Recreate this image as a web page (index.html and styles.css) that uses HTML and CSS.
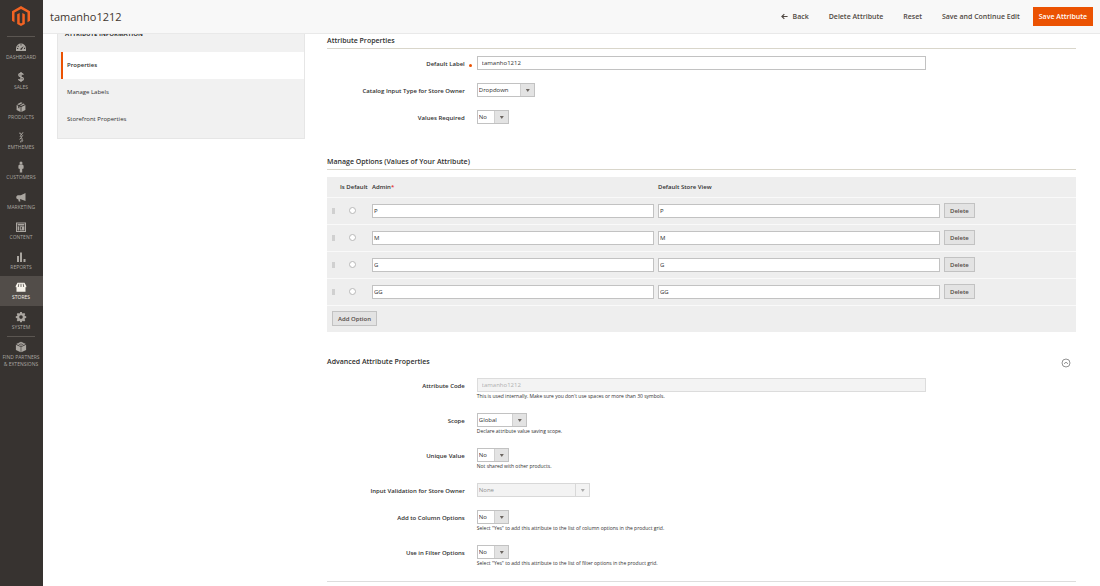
FILE: index.html
```html
<!DOCTYPE html>
<html lang="en">
<head>
<meta charset="utf-8">
<title>tamanho1212</title>
<link rel="stylesheet" href="styles.css">
</head>
<body>
<nav class="menu" aria-label="Main">
  <a class="logo" href="#" aria-label="Home">
    <svg viewBox="0 0 18 20"><path d="M9 0 0 5.2v9.6l2.5 1.4V6.6L9 2.9l6.5 3.7v9.6l2.5-1.4V5.2z"/><path d="M10.3 7v9.7L9 17.4l-1.300-.7V7L5.200 8.300v9.700L9 20l3.800-2V8.300z"/></svg>
  </a>
  <ul class="menu-list">
    <li><a class="menu-item" href="#"><svg viewBox="0 0 12 12"><path fill-rule="evenodd" d="M1 10V7.500a5 5 0 0 1 10 0V10zM5.300 8.800h1.400L8.800 5 5.600 7.500zM2 7h1.200v1H2zM3 4.500l.9.700-.6.700-.8-.7zM5.500 3.200h1v1.200h-1zM9 6.800h1.100V8H9z"/></svg>Dashboard</a></li>
    <li><a class="menu-item" href="#"><svg viewBox="0 0 12 12"><path class="stroke" d="M8.300 3.700C8 2.800 7 2.500 6 2.500c-1.300 0-2.200.6-2.200 1.600C3.800 6.300 8.300 5.300 8.300 7.800c0 1.100-1 1.700-2.300 1.700S3.800 9 3.600 8M6 1v10"/></svg>Sales</a></li>
    <li><a class="menu-item" href="#"><svg viewBox="0 0 12 12"><path d="m6 1.300 1.700.8L4 4 2.200 3.200zM8.500 2.500l1.400.700L6 5l-1-.5zM1.600 4l1.600.8v2.100l1.200.6V5.400l1.200.6v4.900L1.600 9zM10.400 4v5l-4 1.900V6z"/></svg>Products</a></li>
    <li><a class="menu-item" href="#"><svg viewBox="0 0 12 12"><path class="thin" d="M4.200 2.200c1.500-.6 2 .7 1.800 1.700S4.500 5.500 6 6.500s1.700 1.700.8 2.500-1.500 1-1.300 2.300M8 1.300 6 4.200M8.200 4.300 6 6.200M4.500 8.300l2-1.400M6.500 11.200l1.400-2"/></svg>Emthemes</a></li>
    <li><a class="menu-item" href="#"><svg viewBox="0 0 12 12"><circle cx="6" cy="2" r="1.500"/><path d="M4.600 3.500h2.800l1.200 1v2.900l-.9.400v.2l-.5-.3V11.500H4.800V7.700l-.5.3v-.2l-.9-.4V4.500z"/></svg>Customers</a></li>
    <li><a class="menu-item" href="#"><svg viewBox="0 0 12 12"><path d="M10.500 2v8L5.800 8.300H4.900l.5 2.300H3.800l-.6-2.300h-.6L1.300 7.200V5.400l1.300-1.200h3.200z"/></svg>Marketing</a></li>
    <li><a class="menu-item" href="#"><svg viewBox="0 0 12 12"><path fill-rule="evenodd" d="M1 1.500h10v9.500H1zM2 2.500V10h8V2.500zM2.600 3h6.800v1.500H2.600zM2.600 5.200h1.700v4.200H2.600zM5 5.200h4.400v4.200H5zM5.800 6v2.600h1V6z"/></svg>Content</a></li>
    <li><a class="menu-item" href="#"><svg viewBox="0 0 12 12"><path d="M2 5h2v6H2zM5 1.500h2V11H5zM8.500 8h2v3h-2z"/></svg>Reports</a></li>
    <li><a class="menu-item active" href="#"><svg viewBox="0 0 12 12"><path fill-rule="evenodd" d="M2.500 1.800h7L11.300 5v1.300H10.500V10.700h-9V6.300H.7V5zM3.600 2.800 2.800 6h.8l.7-3.200zM5.600 2.800V6h.8V2.800zM7.700 2.800 8.400 6h.8l-.8-3.200z"/></svg>Stores</a></li>
    <li><a class="menu-item" href="#"><svg viewBox="0 0 12 12"><path fill-rule="evenodd" d="M5.100 1h1.800l.3 1.300.7.3 1.200-.7 1.200 1.200-.7 1.200.3.700 1.300.3v1.700l-1.300.3-.3.700.7 1.200-1.200 1.200-1.200-.7-.7.300L6.900 11.200H5.100l-.3-1.200-.7-.3-1.200.7-1.200-1.200.7-1.200-.3-.7L.8 7V5.300L2.100 5l.3-.7-.7-1.200 1.200-1.200 1.200.7.700-.3zM6 4.300a1.800 1.800 0 1 0 0 3.600 1.800 1.800 0 0 0 0-3.600z"/></svg>System</a></li>
    <li class="partners"><a class="menu-item" href="#"><svg viewBox="0 0 12 12"><path d="M6 .8 10.800 3 6 5.400 1.200 3z"/><path d="M.9 3.700 5.700 6.100v5.200L.9 8.900zM11.100 3.700 6.300 6.100v5.200l4.800-2.400z"/><path class="cut" d="M3.600 3 6 4.200 8.400 3M6 1.800v1.400"/></svg>Find Partners &amp;&nbsp;Extensions</a></li>
  </ul>
</nav>

<div class="page">
  <header class="topbar">
    <h1 class="page-title">tamanho1212</h1>
    <div class="actions">
      <button type="button" class="action"><svg class="back-icon" viewBox="0 0 8 8"><path d="M7.500 4H1M3.800 1.200 1 4l2.800 2.800"/></svg>Back</button>
      <button type="button" class="action">Delete Attribute</button>
      <button type="button" class="action">Reset</button>
      <button type="button" class="action">Save and Continue Edit</button>
      <button type="button" class="action primary">Save Attribute</button>
    </div>
  </header>

  <div class="content">
    <aside class="tabs">
      <h2 class="tabs-title">Attribute Information</h2>
      <a class="tab current" href="#">Properties</a>
      <a class="tab" href="#">Manage Labels</a>
      <a class="tab" href="#">Storefront Properties</a>
    </aside>

    <main class="sections">
      <section class="section">
        <h2 class="section-title ruled">Attribute Properties</h2>
        <div class="fields">
          <div class="field">
            <label class="label required" for="label">Default Label</label>
            <div class="control"><input class="text" id="label" type="text" value="tamanho1212"></div>
          </div>
          <div class="field">
            <label class="label" for="type">Catalog Input Type for Store Owner</label>
            <div class="control"><span class="select w-medium"><select id="type"><option>Dropdown</option></select></span></div>
          </div>
          <div class="field">
            <label class="label" for="required">Values Required</label>
            <div class="control"><span class="select w-tiny"><select id="required"><option>No</option><option>Yes</option></select></span></div>
          </div>
        </div>
      </section>

      <section class="section options-section">
        <h2 class="section-title ruled">Manage Options (Values of Your Attribute)</h2>
        <table class="options">
          <colgroup><col class="col-drag"><col class="col-default"><col><col><col class="col-delete"></colgroup>
          <thead>
            <tr><th></th><th class="nowrap">Is Default</th><th>Admin<span class="star">*</span></th><th>Default Store View</th><th></th></tr>
          </thead>
          <tbody>
            <tr>
              <td><span class="drag"></span></td>
              <td><input class="radio" type="radio" name="default" aria-label="P is default"></td>
              <td><input class="text compact" type="text" value="P" aria-label="Admin"></td>
              <td><input class="text compact" type="text" value="P" aria-label="Default Store View"></td>
              <td><button type="button" class="button">Delete</button></td>
            </tr>
            <tr>
              <td><span class="drag"></span></td>
              <td><input class="radio" type="radio" name="default" aria-label="M is default"></td>
              <td><input class="text compact" type="text" value="M" aria-label="Admin"></td>
              <td><input class="text compact" type="text" value="M" aria-label="Default Store View"></td>
              <td><button type="button" class="button">Delete</button></td>
            </tr>
            <tr>
              <td><span class="drag"></span></td>
              <td><input class="radio" type="radio" name="default" aria-label="G is default"></td>
              <td><input class="text compact" type="text" value="G" aria-label="Admin"></td>
              <td><input class="text compact" type="text" value="G" aria-label="Default Store View"></td>
              <td><button type="button" class="button">Delete</button></td>
            </tr>
            <tr>
              <td><span class="drag"></span></td>
              <td><input class="radio" type="radio" name="default" aria-label="GG is default"></td>
              <td><input class="text compact" type="text" value="GG" aria-label="Admin"></td>
              <td><input class="text compact" type="text" value="GG" aria-label="Default Store View"></td>
              <td><button type="button" class="button">Delete</button></td>
            </tr>
          </tbody>
          <tfoot>
            <tr><td class="add" colspan="5"><button type="button" class="button">Add Option</button></td></tr>
          </tfoot>
        </table>
      </section>

      <section class="section advanced">
        <div class="section-head">
          <h2 class="section-title">Advanced Attribute Properties</h2>
          <button type="button" class="collapse" aria-label="Collapse"><svg viewBox="0 0 10 10"><circle cx="5" cy="5" r="4"/><path d="M3 5.800 5 4.200l2 1.600"/></svg></button>
        </div>
        <div class="fields">
          <div class="field">
            <label class="label" for="code">Attribute Code</label>
            <div class="control"><input class="text" id="code" type="text" value="tamanho1212" disabled><p class="note">This is used internally. Make sure you don't use spaces or more than 30 symbols.</p></div>
          </div>
          <div class="field">
            <label class="label" for="scope">Scope</label>
            <div class="control"><span class="select w-small"><select id="scope"><option>Global</option></select></span><p class="note">Declare attribute value saving scope.</p></div>
          </div>
          <div class="field">
            <label class="label" for="unique">Unique Value</label>
            <div class="control"><span class="select w-tiny"><select id="unique"><option>No</option><option>Yes</option></select></span><p class="note">Not shared with other products.</p></div>
          </div>
          <div class="field">
            <label class="label" for="validation">Input Validation for Store Owner</label>
            <div class="control"><span class="select w-large off"><select id="validation" disabled><option>None</option></select></span></div>
          </div>
          <div class="field">
            <label class="label" for="column">Add to Column Options</label>
            <div class="control"><span class="select w-tiny"><select id="column"><option>No</option><option>Yes</option></select></span><p class="note">Select "Yes" to add this attribute to the list of column options in the product grid.</p></div>
          </div>
          <div class="field">
            <label class="label" for="filter">Use in Filter Options</label>
            <div class="control"><span class="select w-tiny"><select id="filter"><option>No</option><option>Yes</option></select></span><p class="note">Select "Yes" to add this attribute to the list of filter options in the product grid.</p></div>
          </div>
        </div>
      </section>
    </main>
  </div>
</div>
</body>
</html>
```
FILE: styles.css
```css
*, *::before, *::after { box-sizing: border-box; }

body {
  margin: 0;
  display: flex;
  min-height: 100vh;
  background: #fff;
  color: #303030;
  font: 6px/8px "Open Sans", "Noto Sans", sans-serif;
}

h1, h2, p, ul { margin: 0; padding: 0; font-size: inherit; }
ul { list-style: none; }
a { color: inherit; text-decoration: none; }
button, input, select { font: inherit; color: inherit; margin: 0; }
button { cursor: pointer; }

/* Side menu */
.menu { flex: 0 0 43px; padding-right: 1px; background: #373330; color: #aaa6a0; }
.logo { display: flex; justify-content: center; height: 36px; padding-top: 6px; }
.logo svg { width: 18px; height: 20px; fill: #f26322; }
.menu-list { position: relative; }
.menu-list::before, .partners::before {
  content: "";
  position: absolute;
  top: 0;
  left: 7px;
  right: 7px;
  border-top: 1px solid #5b5651;
}
.partners { position: relative; }
.menu-item {
  display: flex;
  flex-direction: column;
  align-items: center;
  gap: 1px;
  min-height: 30px;
  padding-top: 5px;
  font-size: 5px;
  line-height: 7px;
  text-align: center;
  text-transform: uppercase;
}
.menu-item svg { width: 12px; height: 12px; fill: currentColor; }
.menu-item .stroke, .menu-item .thin { fill: none; stroke: currentColor; stroke-width: 1.400; }
.menu-item .thin { stroke-width: 1; }
.menu-item .cut { fill: none; stroke: #373330; stroke-width: .6; }
.menu-item.active { margin-right: -1px; padding-right: 1px; background: #524d49; color: #f7f3eb; }

/* Header */
.page { flex: 1; min-width: 0; }
.topbar {
  display: flex;
  align-items: center;
  justify-content: space-between;
  height: 34px;
  padding: 0 7px;
  background: #f8f8f8;
  border-bottom: 1px solid #e9e9e9;
}
.page-title { font-size: 11px; line-height: 16px; font-weight: 400; color: #41362f; }
.actions { display: flex; align-items: center; }
.action {
  display: flex;
  align-items: center;
  gap: 5px;
  height: 19px;
  padding: 0 10px;
  border: 0;
  background: none;
  color: #514943;
  font-size: 7px;
  font-weight: 600;
}
.action.primary { margin-left: 3px; padding: 0 6px; background: #eb5202; color: #fff; }
.back-icon { width: 7px; height: 7px; fill: none; stroke: currentColor; stroke-width: 1.300; }

/* Two-column body */
.content {
  display: grid;
  grid-template-columns: minmax(0, 248fr) minmax(0, 749fr);
  gap: 22px;
  align-items: start;
  padding: 0 24px 0 14px;
  overflow: hidden;
}
.tabs { margin-top: -7px; padding-bottom: 5px; background: #f1f1f1; border: 1px solid #e6e6e6; }
.tabs-title { padding: 2px 7px 14px; font-weight: 700; text-transform: uppercase; }
.tab { display: block; padding: 9px; line-height: 9px; }
.tab.current { background: #fff; border-left: 2px solid #eb5202; margin-left: 3px; padding: 9px 4px; font-weight: 600; }

.section-title { font-size: 7px; line-height: 12px; font-weight: 600; }
.section-title.ruled { padding-bottom: 1px; border-bottom: 1px solid #d9d6cb; }
.section { padding-top: 1px; }
.fields { display: flex; flex-direction: column; gap: 13px; padding-top: 7px; }
.field { display: grid; grid-template-columns: 20% 60%; }
.label { padding: 4px 12px 0 0; font-weight: 600; text-align: right; }
.required { position: relative; }
.required::after {
  content: "";
  position: absolute;
  right: 5px;
  top: 8px;
  width: 3px;
  height: 3px;
  border-radius: 50%;
  background: #eb5202;
}
.note { padding-top: 1px; font-size: 5px; line-height: 7px; }

.text {
  display: block;
  width: 100%;
  height: 14px;
  padding: 0 4px;
  border: 1px solid #c2c2c2;
  border-radius: 0;
  background: #fff;
}
.text.compact { padding: 0 1px; }
.text:disabled { background: #f3f3f3; border-color: #dcdcdc; color: #b0b0b0; }

.select { display: block; position: relative; height: 14px; }
.select select {
  display: block;
  width: 100%;
  height: 100%;
  padding: 0 15px 0 1px;
  appearance: none;
  border: 1px solid #c2c2c2;
  border-radius: 0;
  background: linear-gradient(#d0d0d0, #d0d0d0) right 13px top / 1px 100% no-repeat, linear-gradient(#e3e3e3, #e3e3e3) right / 13px 100% no-repeat, #fff;
}
.select::after {
  content: "";
  position: absolute;
  right: 5px;
  top: 6px;
  width: 4px;
  height: 3px;
  background: #6b6560;
  clip-path: polygon(0 0, 100% 0, 50% 100%);
  pointer-events: none;
}
.select.off select { border-color: #d8d8d8; background: linear-gradient(#d8d8d8, #d8d8d8) right 13px top / 1px 100% no-repeat, #f3f3f3; color: #909090; opacity: 1; }
.select.off::after { background: #aaa; }
.w-tiny { width: 32px; }
.w-small { width: 50px; }
.w-medium { width: 58px; }
.w-large { width: 113px; }

/* Options table */
.options-section { padding-top: 32px; }
.options { width: 100%; margin-top: 7px; table-layout: fixed; border-collapse: collapse; background: #eee; }
.options th, .options td { padding: 0 2px; text-align: left; vertical-align: middle; }
.options th { height: 20px; font-weight: 600; }
.options tbody tr, .options tfoot tr { border-top: 1px solid #f9f9f9; }
.options td { height: 27px; }
.options .nowrap { padding: 0 1px; white-space: nowrap; }
.options .add { padding-left: 5px; }
.col-drag { width: 12px; }
.col-default { width: 31px; }
.col-delete { width: 134px; }
.star { color: #e22626; }
.drag { display: block; width: 3px; height: 6px; margin: 0 auto; background: #d0d0d0; }
.radio {
  display: block;
  width: 7px;
  height: 7px;
  margin: 0 auto 0 8px;
  appearance: none;
  border: 1px solid #b8b8b8;
  border-radius: 50%;
  background: #fff;
}
.radio:checked { background: #514943; }
.button {
  display: block;
  height: 15px;
  padding: 0 5px;
  border: 1px solid #c2c2c2;
  background: #e3e3e3;
  color: #514943;
  font-weight: 600;
}

/* Advanced section */
.advanced { padding: 24px 0 14px; border-bottom: 1px solid #ddd; }
.section-head { display: flex; justify-content: space-between; }
.advanced .fields { padding-top: 10px; }
.collapse { width: 10px; height: 10px; margin: 2px 5px 0 0; padding: 0; border: 0; background: none; }
.collapse svg { display: block; width: 10px; height: 10px; fill: none; stroke: #777; stroke-width: .8; }
```
